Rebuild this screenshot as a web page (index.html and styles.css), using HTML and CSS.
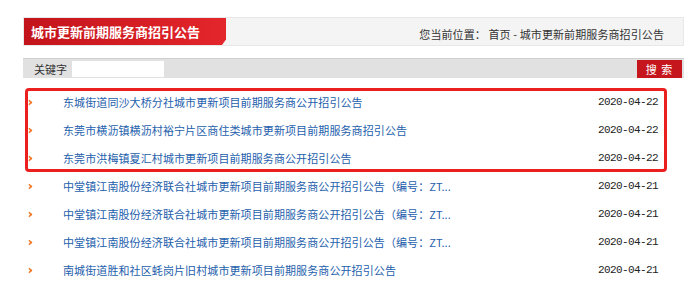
FILE: index.html
```html
<!DOCTYPE html>
<html lang="zh-CN">
<head>
<meta charset="utf-8">
<title>城市更新前期服务商招引公告</title>
<link rel="stylesheet" href="styles.css">
</head>
<body>
<div class="wrap">
  <div class="header">
    <h1 class="title">城市更新前期服务商招引公告</h1>
    <div class="crumb">您当前位置： 首页 - 城市更新前期服务商招引公告</div>
  </div>
  <div class="search">
    <span class="label">关键字</span>
    <span class="input"></span>
    <span class="btn">搜 索</span>
  </div>
  <div class="list">
    <div class="group">
      <div class="row"><i class="arr"></i><a class="link">东城街道同沙大桥分社城市更新项目前期服务商公开招引公告</a><span class="date">2020-04-22</span></div>
      <div class="row"><i class="arr"></i><a class="link">东莞市横沥镇横沥村裕宁片区商住类城市更新项目前期服务商招引公告</a><span class="date">2020-04-22</span></div>
      <div class="row"><i class="arr"></i><a class="link">东莞市洪梅镇夏汇村城市更新项目前期服务商公开招引公告</a><span class="date">2020-04-22</span></div>
    </div>
    <div class="row"><i class="arr"></i><a class="link">中堂镇江南股份经济联合社城市更新项目前期服务商公开招引公告（编号：ZT...</a><span class="date">2020-04-21</span></div>
    <div class="row"><i class="arr"></i><a class="link">中堂镇江南股份经济联合社城市更新项目前期服务商公开招引公告（编号：ZT...</a><span class="date">2020-04-21</span></div>
    <div class="row"><i class="arr"></i><a class="link">中堂镇江南股份经济联合社城市更新项目前期服务商公开招引公告（编号：ZT...</a><span class="date">2020-04-21</span></div>
    <div class="row"><i class="arr"></i><a class="link">南城街道胜和社区蚝岗片旧村城市更新项目前期服务商公开招引公告</a><span class="date">2020-04-21</span></div>
  </div>
</div>
</body>
</html>
```

FILE: styles.css
```css
* { box-sizing: border-box; }
body {
  margin: 0;
  background: #fff;
  font-family: "Noto Sans CJK SC", "Noto Sans", sans-serif;
  font-size: 11px;
  color: #333;
}
.wrap {
  margin-left: 23px;
  width: 661px;
  padding-top: 17px;
}
.header {
  height: 29px;
  background: #f4f4f4;
  border: 1px solid #e8e8e8;
  display: flex;
  align-items: center;
  justify-content: space-between;
}
.title {
  margin: 0;
  height: 27px;
  width: 202px;
  padding-left: 7px;
  background: linear-gradient(90deg, #c3141b 0%, #e3262b 100%);
  color: #fff;
  font-size: 13px;
  font-weight: bold;
  line-height: 27px;
  clip-path: polygon(0 0, 100% 0, 100% 80%, 98% 100%, 0 100%);
}
.crumb {
  padding-right: 19px;
  padding-top: 4px;
  color: #333;
  letter-spacing: 0.1px;
}
.search {
  margin-top: 12px;
  height: 20px;
  background: #e1e1e1;
  border-top: 1px solid #cfcfcf;
  display: flex;
  align-items: center;
  padding-left: 11px;
  padding-right: 2px;
}
.label { color: #333; }
.input {
  width: 92px;
  height: 16px;
  background: #fff;
  margin-left: 5px;
}
.btn {
  margin-left: auto;
  width: 45px;
  height: 18px;
  background: #c5161d;
  color: #fff;
  font-size: 11px;
  line-height: 18px;
  text-align: center;
  letter-spacing: 1px;
}
.list {
  margin-top: 10px;
  margin-left: 2px;
  width: 642px;
}
.group {
  position: relative;
}
.group::after {
  content: "";
  position: absolute;
  inset: 0;
  border: 3px solid #ec1f1f;
  border-radius: 4px;
}
.row {
  height: 28px;
  display: flex;
  align-items: center;
  padding-left: 2px;
  padding-right: 9px;
}
.arr {
  width: 5px;
  height: 5px;
  border-top: 2px solid #f07a2a;
  border-right: 2px solid #f07a2a;
  transform: rotate(45deg) scale(0.8);
  margin-right: 31px;
}
.link {
  color: #2460ac;
  letter-spacing: 0.1px;
  white-space: nowrap;
}
.date {
  margin-left: auto;
  font-family: "Liberation Mono", monospace;
  font-size: 11px;
  letter-spacing: -0.6px;
  color: #222;
}
```
